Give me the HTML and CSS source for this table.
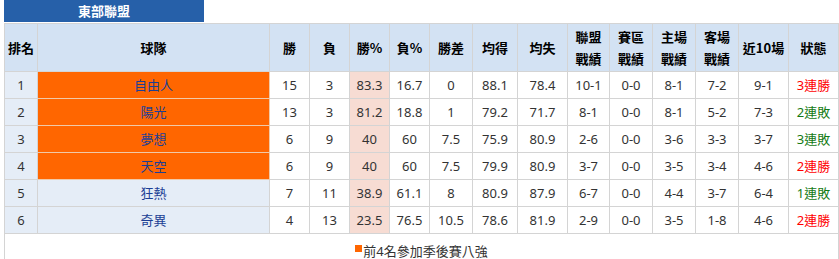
FILE: index.html
```html
<!DOCTYPE html>
<html lang="zh-Hant">
<head>
<meta charset="utf-8">
<link rel="stylesheet" href="styles.css">
</head>
<body>
<div class="wrap">
  <div class="tab">東部聯盟</div>
  <table class="standings">
    <colgroup>
      <col class="c-rank"><col class="c-team"><col class="c-n"><col class="c-n"><col class="c-n"><col class="c-n">
      <col class="c-gb"><col class="c-avg"><col class="c-avg2"><col class="c-rec1"><col class="c-rec"><col class="c-rec"><col class="c-rec"><col class="c-w"><col class="c-w">
    </colgroup>
    <thead>
      <tr>
        <th>排名</th><th>球隊</th><th>勝</th><th>負</th><th>勝%</th><th>負%</th><th>勝差</th><th>均得</th><th>均失</th>
        <th>聯盟<br>戰績</th><th>賽區<br>戰績</th><th>主場<br>戰績</th><th>客場<br>戰績</th><th>近10場</th><th>狀態</th>
      </tr>
    </thead>
    <tbody>
      <tr><td class="rank">1</td><td class="team po">自由人</td><td>15</td><td>3</td><td class="pct">83.3</td><td>16.7</td><td>0</td><td>88.1</td><td>78.4</td><td>10-1</td><td>0-0</td><td>8-1</td><td>7-2</td><td>9-1</td><td class="win">3連勝</td></tr>
      <tr><td class="rank">2</td><td class="team po">陽光</td><td>13</td><td>3</td><td class="pct">81.2</td><td>18.8</td><td>1</td><td>79.2</td><td>71.7</td><td>8-1</td><td>0-0</td><td>8-1</td><td>5-2</td><td>7-3</td><td class="loss">2連敗</td></tr>
      <tr><td class="rank">3</td><td class="team po">夢想</td><td>6</td><td>9</td><td class="pct">40</td><td>60</td><td>7.5</td><td>75.9</td><td>80.9</td><td>2-6</td><td>0-0</td><td>3-6</td><td>3-3</td><td>3-7</td><td class="loss">3連敗</td></tr>
      <tr><td class="rank">4</td><td class="team po">天空</td><td>6</td><td>9</td><td class="pct">40</td><td>60</td><td>7.5</td><td>79.9</td><td>80.9</td><td>3-7</td><td>0-0</td><td>3-5</td><td>3-4</td><td>4-6</td><td class="win">2連勝</td></tr>
      <tr><td class="rank">5</td><td class="team">狂熱</td><td>7</td><td>11</td><td class="pct">38.9</td><td>61.1</td><td>8</td><td>80.9</td><td>87.9</td><td>6-7</td><td>0-0</td><td>4-4</td><td>3-7</td><td>6-4</td><td class="loss">1連敗</td></tr>
      <tr><td class="rank">6</td><td class="team">奇異</td><td>4</td><td>13</td><td class="pct">23.5</td><td>76.5</td><td>10.5</td><td>78.6</td><td>81.9</td><td>2-9</td><td>0-0</td><td>3-5</td><td>1-8</td><td>4-6</td><td class="win">2連勝</td></tr>
      <tr><td class="legend" colspan="15"><span class="sq"></span>前4名參加季後賽八強</td></tr>
    </tbody>
  </table>
</div>
</body>
</html>
```

FILE: styles.css
```css
html, body {
  margin: 0;
  padding: 0;
  background: #ffffff;
}
body {
  font-family: "Noto Sans", "Noto Sans CJK TC", sans-serif;
  font-size: 13px;
  color: #333333;
}
.wrap {
  padding-left: 4px;
}
.tab {
  width: 200px;
  height: 22px;
  line-height: 22px;
  background: #2660a9;
  color: #ffffff;
  font-weight: bold;
  text-align: center;
  font-family: "Noto Sans CJK TC", sans-serif;
  font-size: 13px;
  margin-bottom: 1px;
}
.standings {
  width: 834px;
  table-layout: fixed;
  border-collapse: collapse;
  text-align: center;
}
.c-rank { width: 33px; }
.c-team { width: 232px; }
.c-n { width: 40px; }
.c-gb { width: 43px; }
.c-avg { width: 45px; }
.c-avg2 { width: 50px; }
.c-rec1 { width: 42px; }
.c-rec { width: 43px; }
.c-w { width: 50px; }
.standings th,
.standings td {
  border: 1px solid #d4d4d4;
  padding: 0;
}
.standings th {
  background: #d3e2f3;
  color: #000000;
  font-weight: bold;
  height: 47px;
  line-height: 22px;
  font-family: "Noto Sans CJK TC", sans-serif;
}
.standings td {
  height: 26px;
  line-height: 26px;
}
.standings td.rank {
  background: #e5edf7;
}
.standings td.team {
  background: #e5edf7;
  color: #1c3f95;
  font-family: "Noto Sans CJK TC", sans-serif;
}
.standings td.team.po {
  background: #ff6600;
  border-color: #f0c9a8;
}
.standings td.pct {
  background: #f7dcd3;
}
.standings td.win {
  color: #ff0000;
}
.standings td.loss {
  color: #137a13;
}
.standings td.legend {
  height: 34px;
  line-height: 20px;
  padding-top: 7px;
  vertical-align: top;
  color: #333333;
}
.sq {
  display: inline-block;
  width: 7px;
  height: 7px;
  background: #ff6600;
  margin-right: 1px;
  vertical-align: 4px;
}
```
